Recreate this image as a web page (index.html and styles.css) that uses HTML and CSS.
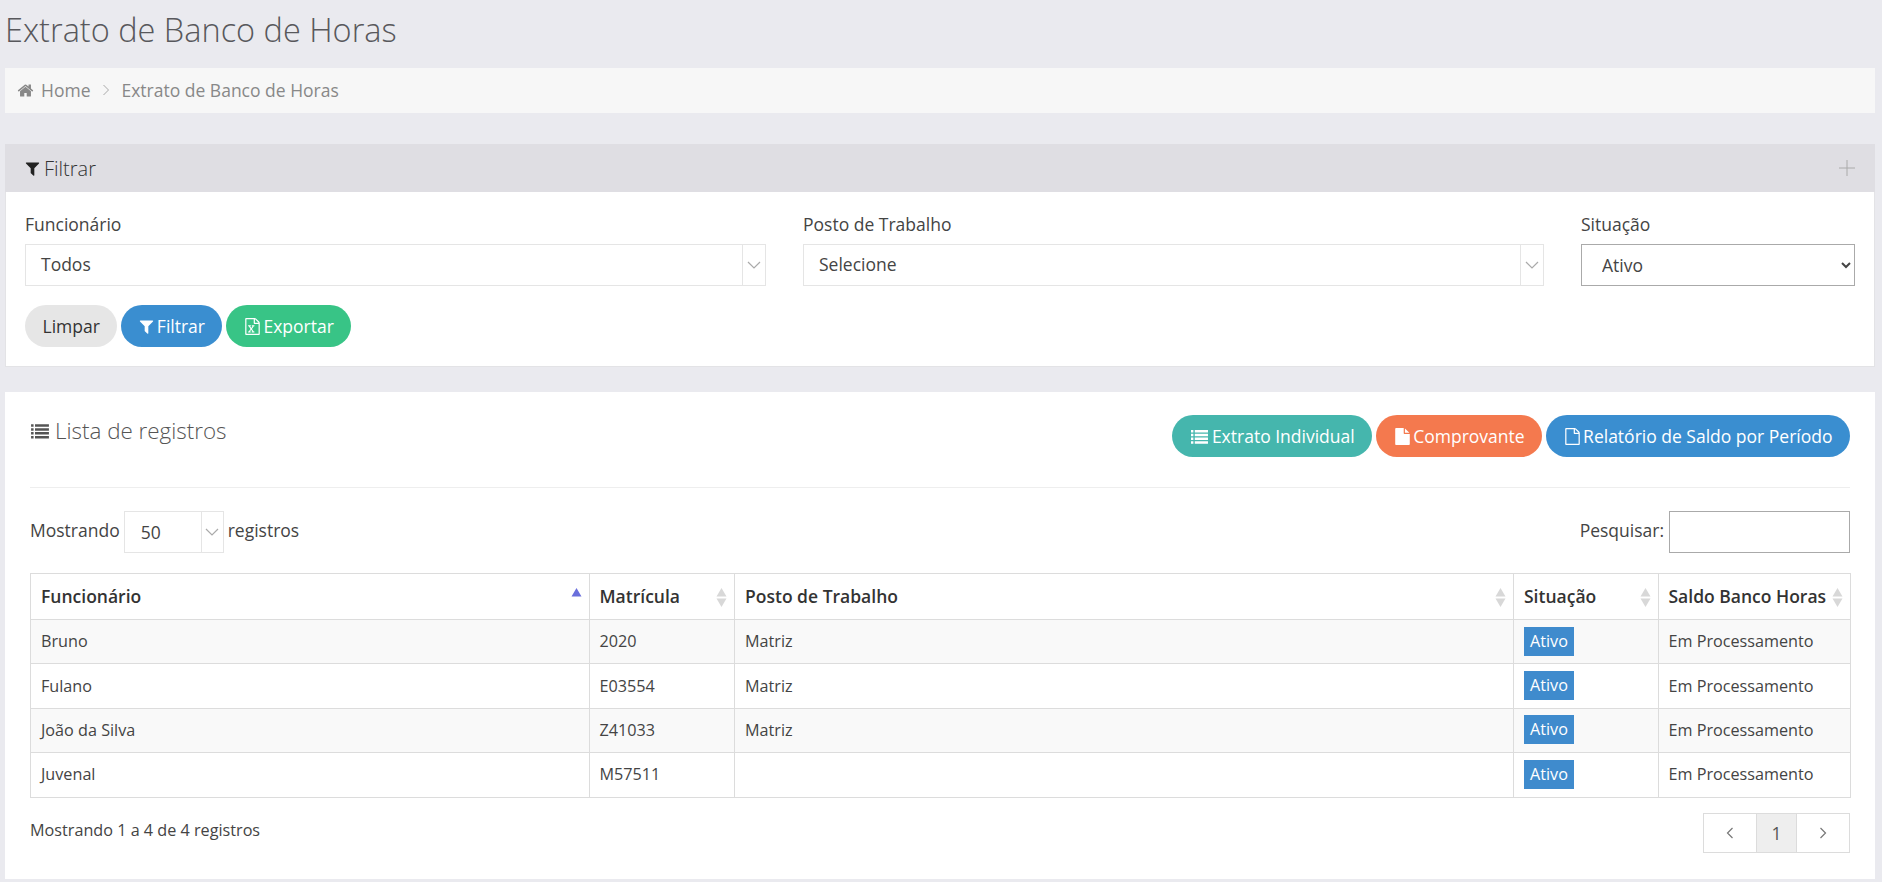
FILE: index.html
```html
<!DOCTYPE html>
<html lang="pt-BR">
<head>
<meta charset="utf-8">
<title>Extrato de Banco de Horas</title>
<link rel="stylesheet" href="styles.css">
</head>
<body>
<svg class="defs" width="0" height="0" aria-hidden="true">
  <symbol id="i-home" viewBox="0 0 1792 1792"><path d="M1472 992v480q0 26-19 45t-45 19h-384v-384h-256v384h-384q-26 0-45-19t-19-45v-480q0-1 .5-3t.5-3l575-474 575 474q1 2 1 6zm223-69l-62 74q-8 9-21 11h-3q-13 0-21-7l-692-577-692 577q-12 8-24 7-13-2-21-11l-62-74q-8-10-7-23.5t11-21.5l719-599q32-26 76-26t76 26l244 204v-195q0-14 9-23t23-9h192q14 0 23 9t9 23v408l219 182q10 8 11 21.5t-7 23.5z"/></symbol>
  <symbol id="i-filter" viewBox="0 0 1792 1792"><path d="M1595 295q17 41-14 70l-493 493v742q0 42-39 59-13 5-25 5-27 0-45-19l-256-256q-19-19-19-45v-486l-493-493q-31-29-14-70 17-39 59-39h1280q42 0 59 39z"/></symbol>
  <symbol id="i-list" viewBox="0 0 1792 1792"><path d="M96 288h224v224h-224zM448 288h1248v224h-1248zM96 640h224v224h-224zM448 640h1248v224h-1248zM96 992h224v224h-224zM448 992h1248v224h-1248zM96 1344h224v224h-224zM448 1344h1248v224h-1248z"/></symbol>
  <symbol id="i-file" viewBox="0 0 1792 1792"><path d="M1152 512v-472q22 14 36 28l408 408q14 14 28 36h-472zm-128 32q0 40 28 68t68 28h544v1056q0 40-28 68t-68 28h-1344q-40 0-68-28t-28-68v-1600q0-40 28-68t68-28h800v544z"/></symbol>
  <symbol id="i-file-o" viewBox="0 0 1792 1792"><path d="M1596 380q28 28 48 76t20 88v1152q0 40-28 68t-68 28h-1344q-40 0-68-28t-28-68v-1600q0-40 28-68t68-28h896q40 0 88 20t76 48zm-444-244v376h376q-10-29-22-41l-313-313q-12-12-41-22zm384 1528v-1024h-416q-40 0-68-28t-28-68v-416h-768v1536h1280z"/></symbol>
  <symbol id="i-excel" viewBox="0 0 1792 1792"><path d="M1596 380q28 28 48 76t20 88v1152q0 40-28 68t-68 28h-1344q-40 0-68-28t-28-68v-1600q0-40 28-68t68-28h896q40 0 88 20t76 48zm-444-244v376h376q-10-29-22-41l-313-313q-12-12-41-22zm384 1528v-1024h-416q-40 0-68-28t-28-68v-416h-768v1536h1280z"/><path d="M429 1430v106h280v-106h-75l103-161q5-7 10-16.500t7.500-13.500h2q1 4 9 16 5 10 11 15l107 160h-76v106h291v-106h-68l-192-273 195-282h67v-107h-279v107h74l-103 159q-4 7-10 16t-9 13h-2q-1-4-9-16-7-11-11-15l-106-157h76v-107h-290v107h68l189 272-194 283h-68z"/></symbol>
  <symbol id="i-sort" viewBox="0 0 11 19"><path d="M5.500 0l5 8.500h-10z"/><path d="M5.500 19l-5-8.500h10z"/></symbol>
  <symbol id="i-sort-asc" viewBox="0 0 11 19"><path d="M5.500 0l5 8.500h-10z"/></symbol>
</svg>

<h1 class="page-title">Extrato de Banco de Horas</h1>

<nav class="breadcrumb">
  <svg class="icon crumb-home"><use href="#i-home"/></svg>
  <span>Home</span>
  <svg class="crumb-sep" viewBox="0 0 8 12"><path d="M1.500 1l5 5-5 5"/></svg>
  <span>Extrato de Banco de Horas</span>
</nav>

<section class="panel filter-panel">
  <header class="panel-head">
    <h2 class="panel-title"><svg class="icon"><use href="#i-filter"/></svg>Filtrar</h2>
    <svg class="plus" viewBox="0 0 16 16"><path d="M8 0v16M0 8h16"/></svg>
  </header>
  <div class="panel-body">
    <div class="form-grid">
      <div class="field">
        <label class="field-label">Funcionário</label>
        <div class="chosen"><span class="chosen-value">Todos</span><span class="chosen-arrow"><svg viewBox="0 0 14 8"><path d="M1 1l6 6 6-6"/></svg></span></div>
      </div>
      <div class="field">
        <label class="field-label">Posto de Trabalho</label>
        <div class="chosen"><span class="chosen-value">Selecione</span><span class="chosen-arrow"><svg viewBox="0 0 14 8"><path d="M1 1l6 6 6-6"/></svg></span></div>
      </div>
      <div class="field">
        <label class="field-label">Situação</label>
        <select class="native-select"><option>Ativo</option><option>Inativo</option></select>
      </div>
    </div>
    <div class="actions">
      <button class="btn btn-grey">Limpar</button>
      <button class="btn btn-blue"><svg class="icon icon-filter"><use href="#i-filter"/></svg>Filtrar</button>
      <button class="btn btn-green"><svg class="icon"><use href="#i-excel"/></svg>Exportar</button>
    </div>
  </div>
</section>

<section class="panel list-panel">
  <header class="list-head">
    <h2 class="list-title"><svg class="icon"><use href="#i-list"/></svg>Lista de registros</h2>
    <div class="list-actions">
      <button class="btn btn-teal"><svg class="icon icon-list"><use href="#i-list"/></svg>Extrato Individual</button>
      <button class="btn btn-orange"><svg class="icon"><use href="#i-file"/></svg>Comprovante</button>
      <button class="btn btn-blue"><svg class="icon"><use href="#i-file-o"/></svg>Relatório de Saldo por Período</button>
    </div>
  </header>

  <div class="table-tools">
    <div class="length">
      <span class="tool-text">Mostrando</span>
      <div class="chosen chosen-small"><span class="chosen-value">50</span><span class="chosen-arrow"><svg viewBox="0 0 14 8"><path d="M1 1l6 6 6-6"/></svg></span></div>
      <span class="tool-text">registros</span>
    </div>
    <label class="search"><span class="tool-text">Pesquisar:</span><input class="search-input" type="search"></label>
  </div>

  <table class="data-table">
    <colgroup><col class="c1"><col class="c2"><col class="c3"><col class="c4"><col class="c5"></colgroup>
    <thead>
      <tr>
        <th>Funcionário<svg class="sort sort-asc"><use href="#i-sort-asc"/></svg></th>
        <th>Matrícula<svg class="sort"><use href="#i-sort"/></svg></th>
        <th>Posto de Trabalho<svg class="sort"><use href="#i-sort"/></svg></th>
        <th>Situação<svg class="sort"><use href="#i-sort"/></svg></th>
        <th>Saldo Banco Horas<svg class="sort"><use href="#i-sort"/></svg></th>
      </tr>
    </thead>
    <tbody>
      <tr><td>Bruno</td><td>2020</td><td>Matriz</td><td><span class="tag">Ativo</span></td><td>Em Processamento</td></tr>
      <tr><td>Fulano</td><td>E03554</td><td>Matriz</td><td><span class="tag">Ativo</span></td><td>Em Processamento</td></tr>
      <tr><td>João da Silva</td><td>Z41033</td><td>Matriz</td><td><span class="tag">Ativo</span></td><td>Em Processamento</td></tr>
      <tr><td>Juvenal</td><td>M57511</td><td></td><td><span class="tag">Ativo</span></td><td>Em Processamento</td></tr>
    </tbody>
  </table>

  <footer class="table-foot">
    <span class="foot-info">Mostrando 1 a 4 de 4 registros</span>
    <nav class="pager">
      <a class="page page-prev"><svg viewBox="0 0 8 12"><path d="M6.500 1l-5 5 5 5"/></svg></a>
      <a class="page page-current">1</a>
      <a class="page page-next"><svg viewBox="0 0 8 12"><path d="M1.500 1l5 5-5 5"/></svg></a>
    </nav>
  </footer>
</section>
</body>
</html>
```

FILE: styles.css
```css
* { box-sizing: border-box; }
html, body { margin: 0; height: 100%; overflow: hidden; }
body {
  background: #eaeaef;
  color: #444;
  font-family: "Open Sans", "Liberation Sans", sans-serif;
  font-size: 17.5px;
  padding: 0 7px 0 5px;
}
.defs { position: absolute; }
.icon { width: 17px; height: 17px; fill: currentColor; flex: none; }

.page-title {
  margin: 0;
  height: 68px;
  padding: 8px 0 0 0;
  font-size: 32.5px;
  line-height: 44px;
  font-weight: 300;
  color: #58585c;
}

.breadcrumb {
  display: flex;
  align-items: center;
  height: 45px;
  padding: 0 0 1px 12px;
  background: #f7f7f7;
  color: #888;
}
.crumb-home { width: 17px; height: 17px; margin-right: 7px; }
.crumb-sep { width: 8px; height: 12px; margin: 0 11px 0 12px; fill: none; stroke: #aaa; stroke-width: 1; }

.panel { background: #fff; }

.filter-panel {
  margin-top: 31px;
  height: 223px;
  border: 1px solid #e3e3e6;
  border-top: 0;
}
.panel-head {
  display: flex;
  align-items: center;
  justify-content: space-between;
  height: 48px;
  margin: 0 -1px;
  padding: 0 20px 0 19px;
  background: #dfdee3;
}
.panel-title {
  display: flex;
  align-items: center;
  margin: 0;
  font-size: 20px;
  font-weight: 300;
  color: #333;
}
.panel-title .icon { width: 17px; height: 17px; margin-right: 3px; color: #222; }
.plus { width: 16px; height: 16px; fill: none; stroke: #aaa; stroke-width: 1; }

.panel-body { padding: 18px 19px 0; }
.form-grid {
  display: grid;
  grid-template-columns: 741px 741px 274px;
  column-gap: 37px;
}
.field-label { display: block; height: 34px; line-height: 28px; color: #444; }

.chosen {
  display: flex;
  align-items: stretch;
  height: 42px;
  border: 1px solid #e5e5e5;
  background: #fff;
}
.chosen-value { flex: 1; padding-left: 15px; line-height: 38px; }
.chosen-arrow {
  display: flex;
  align-items: center;
  justify-content: center;
  width: 23px;
  border-left: 1px solid #e5e5e5;
}
.chosen-arrow svg { width: 14px; height: 8px; fill: none; stroke: #aaa; stroke-width: 1.2; }
.chosen-small { width: 100px; }
.chosen-small .chosen-value { padding-left: 16px; line-height: 40px; }
.chosen-small .chosen-arrow { width: 22px; }

.native-select {
  width: 274px;
  height: 42px;
  padding-left: 16px;
  border: 1px solid #aaa;
  border-radius: 0;
  background: #fff;
  color: #444;
  font-family: inherit;
  font-size: 17.5px;
}

.actions { display: flex; gap: 4px; margin-top: 19px; }
.btn {
  display: inline-flex;
  align-items: center;
  justify-content: center;
  height: 42px;
  padding: 0 17.5px;
  border: 0;
  border-radius: 21px;
  color: #fff;
  font-family: inherit;
  font-size: 17.5px;
  white-space: nowrap;
}
.btn .icon { margin-right: 2.5px; }
.btn .icon-filter { margin: 0 2px 0 -1px; }
.btn .icon-list { width: 19px; height: 19px; margin-right: 3px; }
.btn-grey { background: #e6e6e6; color: #333; }
.btn-blue { background: #3a8ed0; }
.btn-green { background: #38c486; }
.btn-teal { background: #45b6ad; }
.btn-orange { background: #f4794e; }

.list-panel {
  margin-top: 25px;
  height: 487px;
  padding: 23px 25px 0;
}
.list-head {
  display: flex;
  justify-content: space-between;
  align-items: flex-start;
  height: 73px;
  border-bottom: 1px solid #eee;
}
.list-title {
  display: flex;
  align-items: center;
  margin: 0;
  font-size: 22.4px;
  font-weight: 300;
  line-height: 32px;
  color: #555;
}
.list-title .icon { width: 20px; height: 20px; margin-right: 5px; }
.list-actions { display: flex; gap: 4px; }

.table-tools {
  display: flex;
  justify-content: space-between;
  align-items: center;
  height: 42px;
  margin-top: 23px;
}
.length { display: flex; align-items: center; gap: 4px; }
.search { display: flex; align-items: center; gap: 5px; }
.tool-text { margin-bottom: 4px; }
.search-input {
  width: 181px;
  height: 42px;
  border: 1px solid #aaa;
  background: #fff;
  border-radius: 0;
  appearance: none;
}

.data-table {
  width: 1820px;
  margin-top: 20px;
  border-collapse: collapse;
  table-layout: fixed;
  font-size: 16.2px;
}
.c1 { width: 558.5px; }
.c2 { width: 145.5px; }
.c3 { width: 779px; }
.c4 { width: 144.5px; }
.c5 { width: 192.5px; }
.data-table th, .data-table td {
  border: 1px solid #dcdcdc;
  padding: 0 10px 1px;
  text-align: left;
  white-space: nowrap;
}
.data-table th {
  position: relative;
  height: 46px;
  font-size: 17.5px;
  font-weight: 600;
  color: #333;
}
.data-table td { height: 44.4px; }
.data-table tbody tr:nth-child(odd) td { background: #f9f9f9; }
.sort {
  position: absolute;
  right: 7px;
  top: 14px;
  width: 11px;
  height: 19px;
  fill: #d8d8d8;
}
.sort-asc { fill: #6a6fdc; }

.tag {
  display: inline-block;
  width: 50px;
  height: 29px;
  line-height: 29px;
  text-align: center;
  vertical-align: middle;
  background: #3f8bcd;
  color: #fff;
}

.table-foot {
  display: flex;
  justify-content: space-between;
  align-items: center;
  height: 40px;
  margin-top: 15px;
  font-size: 16.2px;
}
.foot-info { margin-bottom: 6px; }
.pager { display: flex; border: 1px solid #dcdcdc; height: 40px; }
.page { display: flex; align-items: center; justify-content: center; color: #555; font-size: 17.5px; }
.page svg { width: 8px; height: 12px; fill: none; stroke: #777; stroke-width: 1.2; }
.page-prev { width: 52px; }
.page-current { width: 41px; background: #eee; border-left: 1px solid #dcdcdc; border-right: 1px solid #dcdcdc; }
.page-next { width: 52px; }
```
